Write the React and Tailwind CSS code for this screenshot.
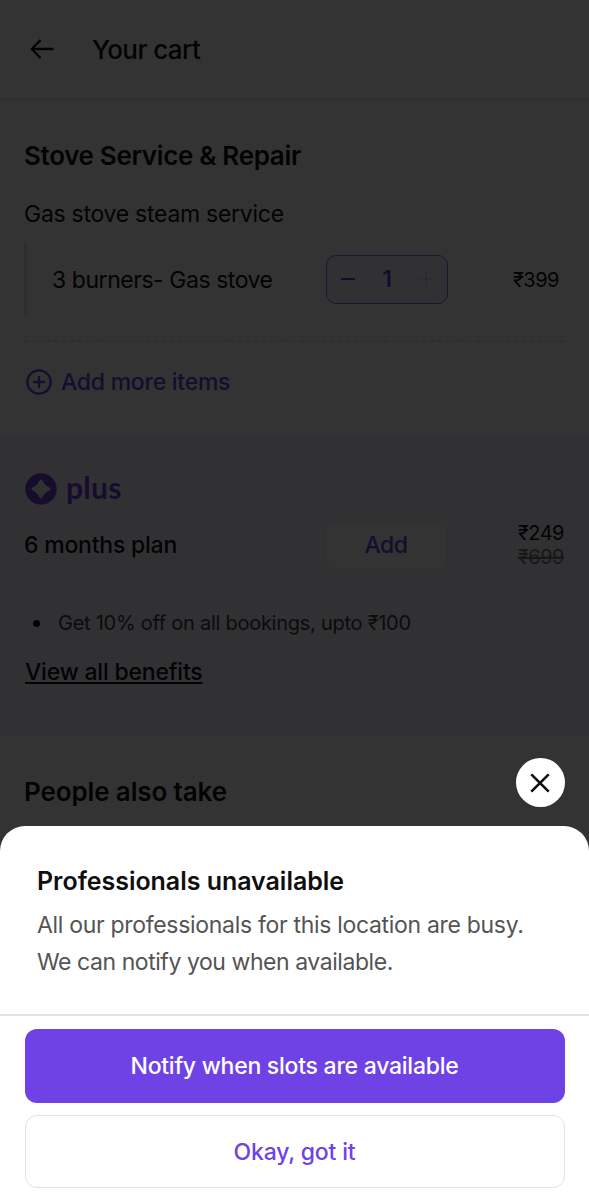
import React from 'react';

const ArrowLeft = () => (
    <svg width="24" height="20" viewBox="0 0 24 20" fill="none" stroke="#0f0f0f" strokeWidth="2.3">
        <path d="M23.5 10H2M10.5 1L1.8 10L10.5 19" />
    </svg>
);

const PlusCircle = () => (
    <svg width="26" height="26" viewBox="0 0 26 26" fill="none" stroke="#6e42e5" strokeWidth="2.3">
        <circle cx="13" cy="13" r="11.7" />
        <path d="M13 7v12M7 13h12" />
    </svg>
);

const PlusLogo = () => (
    <svg width="32" height="32" viewBox="0 0 32 32">
        <circle cx="16" cy="16" r="15.7" fill="#6e42e5" />
        <path
            d="M14.8 7.2Q16 6 17.2 7.2L19.2 10.6Q20.2 11.8 21.4 12.8L24.8 14.8Q26 16 24.8 17.2L21.4 19.2Q20.2 20.2 19.2 21.4L17.2 24.8Q16 26 14.8 24.8L12.8 21.4Q11.8 20.2 10.6 19.2L7.2 17.2Q6 16 7.2 14.8L10.6 12.8Q11.8 11.8 12.8 10.6Z"
            fill="#f5f5fc"
        />
    </svg>
);

const CloseIcon = () => (
    <svg width="20" height="20" viewBox="0 0 20 20" fill="none" stroke="#0f0f0f" strokeWidth="2.6">
        <path d="M1.3 1.3L18.7 18.7M18.7 1.3L1.3 18.7" />
    </svg>
);

const DashedLine = ({ className }) => (
    <svg className={className} height="2" width="100%">
        <line x1="0" y1="1" x2="100%" y2="1" stroke="#dedede" strokeWidth="1.4" strokeDasharray="4 3.66" />
    </svg>
);

const Cart = () => (
    <div className="flex h-full flex-col bg-white text-[#0f0f0f]">
        <header className="flex h-[100px] shrink-0 items-center gap-[38px] border-b-2 border-[#e9e9e9] pl-[30px]">
            <ArrowLeft />
            <h1 className="text-[26px] font-medium tracking-[-0.6px]">Your cart</h1>
        </header>

        <section className="flex h-[334px] shrink-0 flex-col px-[24px] pt-[40px]">
            <h2 className="text-[26px] leading-8 font-semibold tracking-[-0.34px]">Stove Service &amp; Repair</h2>
            <p className="mt-[26px] text-[23px] leading-8 tracking-[-0.27px]">Gas stove steam service</p>
            <div className="mt-[12px] flex h-[74px] items-center border-l-3 border-[#e3e3e3] pl-[25px]">
                <span className="w-[274px] pt-[2px] text-[23px] tracking-[-0.45px]">3 burners- Gas stove</span>
                <div className="flex h-[49px] w-[122px] items-center justify-between rounded-[10px] border-[1.5px] border-[#8f6cf0] bg-[#f5f1ff] px-[14px] text-[#6e42e5]">
                    <svg width="14" height="14" viewBox="0 0 14 14" stroke="currentColor" strokeWidth="2">
                        <path d="M0 7h14" />
                    </svg>
                    <span className="pt-px text-[23px] font-semibold">1</span>
                    <svg width="14" height="14" viewBox="0 0 14 14" stroke="#d6d2de" strokeWidth="1.6">
                        <path d="M0 7h14M7 0v14" />
                    </svg>
                </div>
                <span className="ml-auto pt-[2px] pr-[6px] text-[20px] tracking-[-0.5px]">₹399</span>
            </div>
            <DashedLine className="mt-[24px] shrink-0" />
            <div className="mt-[24px] flex items-center gap-[9px] pl-[2px] text-[#6e42e5]">
                <PlusCircle />
                <span className="text-[23px] leading-8 font-medium tracking-[-0.26px]">Add more items</span>
            </div>
        </section>

        <section className="flex h-[302px] shrink-0 flex-col bg-[#f5f5fc] px-[24px] pt-[39px]">
            <div className="flex h-[32px] items-center gap-[9px] pl-px text-[#6e42e5]">
                <PlusLogo />
                <span className="pb-[4px] font-['Lato'] text-[30px] leading-8 font-bold tracking-[0.3px]">plus</span>
            </div>
            <div className="mt-[15px] flex h-[49px] items-center">
                <span className="w-[301px] shrink-0 pt-px text-[23px] font-medium tracking-[-0.22px]">6 months plan</span>
                <button className="h-[48px] w-[122px] shrink-0 rounded-[10px] border border-[#ececf1] bg-white pt-[2px] text-[23px] font-medium tracking-[-0.5px] text-[#6e42e5]">Add</button>
                <div className="ml-auto flex flex-col pr-px text-right text-[20px] leading-6 tracking-[-0.5px]">
                    <span>₹249</span>
                    <span className="text-[#757575] line-through">₹699</span>
                </div>
            </div>
            <DashedLine className="mt-[18px] w-[424px] shrink-0" />
            <ul className="mt-[20px] flex items-center">
                <li className="flex items-center gap-[18px] pl-[9px] text-[20px] leading-7 tracking-[-0.26px]">
                    <span className="size-[7px] rounded-full bg-[#0f0f0f]" />
                    <span className="text-[#3c3c3c]">Get 10% off on all bookings, upto ₹100</span>
                </li>
            </ul>
            <a className="mt-[19px] ml-px self-start text-[23px] leading-8 font-medium tracking-[-0.2px] underline decoration-2 underline-offset-2">View all benefits</a>
        </section>

        <section className="px-[24px] pt-[40px]">
            <h2 className="text-[26px] leading-8 font-semibold tracking-[-0.13px]">People also take</h2>
        </section>
    </div>
);

const UnavailableSheet = () => (
    <div className="absolute inset-0 flex flex-col justify-end bg-black/80">
        <button className="mr-[24.5px] mb-[19px] flex size-[49px] items-center justify-center self-end rounded-full bg-white">
            <CloseIcon />
        </button>
        <div className="h-[374px] rounded-t-[25px] bg-white">
            <div className="h-[188px] px-[37px] pt-[39px]">
                <h2 className="text-[25px] leading-8 font-semibold tracking-[-0.03px] text-[#0f0f0f]">Professionals unavailable</h2>
                <p className="mt-[10px] text-[23px] leading-[37px] tracking-[-0.31px] text-[#545454]">
                    All our professionals for this location are busy.
                    <br />
                    <span className="tracking-[-0.44px]">We can notify you when available.</span>
                </p>
            </div>
            <div className="flex flex-col gap-[12px] border-t-2 border-[#e3e3e3] px-[24.5px] pt-[13px]">
                <button className="h-[74px] rounded-[12px] bg-[#6e42e5] pt-px text-[23px] font-medium tracking-[-0.25px] text-white">Notify when slots are available</button>
                <button className="h-[73px] rounded-[12px] border-[1.5px] border-[#e3e3e3] pt-px text-[23px] font-medium tracking-[-0.18px] text-[#6e42e5]">Okay, got it</button>
            </div>
        </div>
    </div>
);

const App = () => (
    <div className="relative h-[1200px] w-[589px] overflow-hidden font-['Inter',sans-serif]">
        <Cart />
        <UnavailableSheet />
    </div>
);

export default App;
